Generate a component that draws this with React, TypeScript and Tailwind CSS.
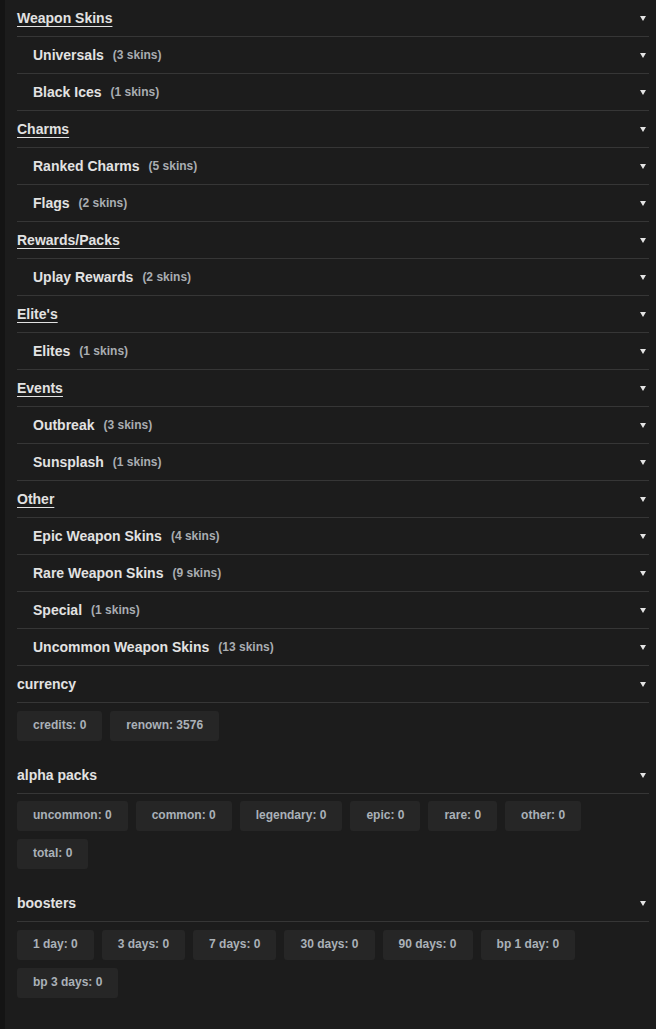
import React from "react";

type Row = { label: string; count?: string; kind: "section" | "sub" | "plain" };

const rows: Row[] = [
  { label: "Weapon Skins", kind: "section" },
  { label: "Universals", count: "(3 skins)", kind: "sub" },
  { label: "Black Ices", count: "(1 skins)", kind: "sub" },
  { label: "Charms", kind: "section" },
  { label: "Ranked Charms", count: "(5 skins)", kind: "sub" },
  { label: "Flags", count: "(2 skins)", kind: "sub" },
  { label: "Rewards/Packs", kind: "section" },
  { label: "Uplay Rewards", count: "(2 skins)", kind: "sub" },
  { label: "Elite's", kind: "section" },
  { label: "Elites", count: "(1 skins)", kind: "sub" },
  { label: "Events", kind: "section" },
  { label: "Outbreak", count: "(3 skins)", kind: "sub" },
  { label: "Sunsplash", count: "(1 skins)", kind: "sub" },
  { label: "Other", kind: "section" },
  { label: "Epic Weapon Skins", count: "(4 skins)", kind: "sub" },
  { label: "Rare Weapon Skins", count: "(9 skins)", kind: "sub" },
  { label: "Special", count: "(1 skins)", kind: "sub" },
  { label: "Uncommon Weapon Skins", count: "(13 skins)", kind: "sub" },
];

const groups: { title: string; tiles: string[]; tight?: boolean }[] = [
  { title: "currency", tiles: ["credits: 0", "renown: 3576"] },
  {
    title: "alpha packs",
    tight: true,
    tiles: ["uncommon: 0", "common: 0", "legendary: 0", "epic: 0", "rare: 0", "other: 0", "total: 0"],
  },
  {
    title: "boosters",
    tiles: ["1 day: 0", "3 days: 0", "7 days: 0", "30 days: 0", "90 days: 0", "bp 1 day: 0", "bp 3 days: 0"],
  },
];

function Arrow() {
  return (
    <span className="mr-[3px] h-0 w-0 border-x-[3px] border-t-[5px] border-x-transparent border-t-[#e4e4e4]" />
  );
}

function HeaderRow({ row }: { row: Row }) {
  return (
    <div className="flex h-[37px] items-center justify-between border-b border-[#363636]">
      <div className={`flex items-center ${row.kind === "sub" ? "pl-[16px]" : ""}`}>
        <span
          className={`text-[14px] font-bold text-[#e2e2e2] ${
            row.kind === "section" ? "underline decoration-1 underline-offset-[3px]" : ""
          }`}
        >
          {row.label}
        </span>
        {row.count && (
          <span className="ml-[9px] text-[12px] font-bold text-[#a9adb2]">{row.count}</span>
        )}
      </div>
      <Arrow />
    </div>
  );
}

export default function App() {
  return (
    <div
      className="flex min-h-screen w-full bg-[#1c1c1c]"
      style={{ fontFamily: '"Liberation Sans", Arial, sans-serif' }}
    >
      <div className="w-[5px] shrink-0 bg-[#141414]" />
      <div className="flex-1 pl-[12px] pr-[7px]">
        {rows.map((r) => (
          <HeaderRow key={r.label} row={r} />
        ))}
        {groups.map((g) => (
          <div key={g.title} className="pb-[16px]">
            <HeaderRow row={{ label: g.title, kind: "plain" }} />
            <div className={`flex flex-wrap gap-[8px] ${g.tight ? "pt-[7px]" : "pt-[8px]"}`}>
              {g.tiles.map((t) => (
                <div
                  key={t}
                  className="flex h-[30px] items-center rounded-[3px] bg-[#262626] px-[16px] pb-[2px] text-[12px] font-bold text-[#aab1b8]"
                >
                  {t}
                </div>
              ))}
            </div>
          </div>
        ))}
      </div>
    </div>
  );
}
